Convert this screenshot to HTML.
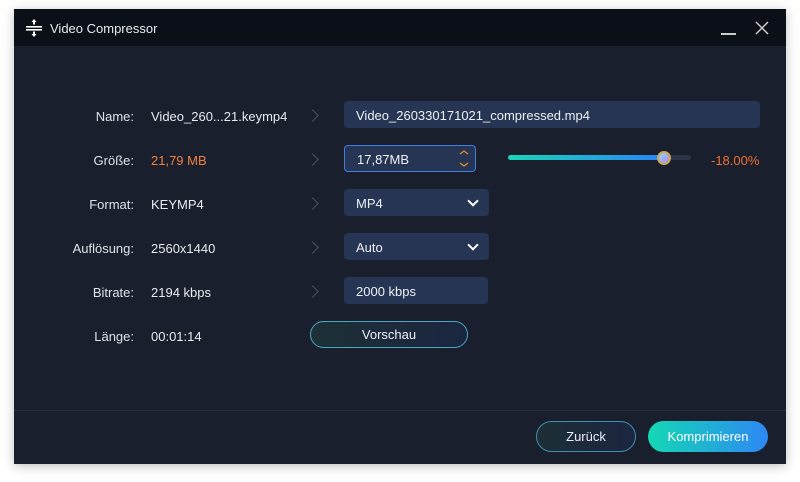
<!DOCTYPE html>
<html><head><meta charset="utf-8"><style>
body{margin:0;width:800px;height:482px;background:#fff;font-family:"Liberation Sans",sans-serif;position:relative;overflow:hidden}
.win{position:absolute;left:14px;top:9px;width:772px;height:455px;background:#1a1f2d;box-shadow:0 2px 10px rgba(0,0,0,.25)}
.tb{position:absolute;left:0;top:0;width:772px;height:37px;background:#0b0f17}
.t{position:absolute;color:#e8eaee;font-size:13px}
.lbl{position:absolute;color:#dfe2e8;font-size:13px;text-align:right;width:120px}
.val{position:absolute;color:#e8eaee;font-size:13px}
.box{position:absolute;background:#263553;border-radius:4px;color:#eef0f4;font-size:13px;box-sizing:border-box;padding-left:12px;padding-top:2px;display:flex;align-items:center}
.chev{position:absolute;width:8px;height:8px;border-right:1.5px solid #4b5363;border-top:1.5px solid #4b5363;transform:rotate(45deg)}
.dd{position:absolute;right:12px;top:8px;width:6px;height:6px;border-right:2px solid #fff;border-bottom:2px solid #fff;transform:rotate(45deg)}
.sep{position:absolute;left:0;top:401px;width:772px;height:1px;background:#262d3c}
</style></head><body>
<div class="win">
<div class="tb">
<svg style="position:absolute;left:12px;top:10px" width="16" height="18" viewBox="0 0 16 18"><g fill="#fff"><rect x="0" y="7" width="16" height="1.6"/><rect x="0" y="10" width="16" height="1.6"/><path d="M8 0l2.5 3H9v2.5H7V3H5.5z"/><path d="M8 18l2.5-3H9v-2.5H7V15H5.5z"/></g></svg>
<div class="t" style="left:36px;top:12px">Video Compressor</div>
<div style="position:absolute;left:707px;top:24px;width:15px;height:1.5px;background:#ccc"></div>
<svg style="position:absolute;left:741px;top:12px" width="14" height="14"><path d="M1 1L13 13M13 1L1 13" stroke="#ccc" stroke-width="1.5"/></svg>
</div>
<div class="lbl" style="left:0;top:100px">Name:</div><div class="val" style="left:137px;top:100px">Video_260...21.keymp4</div>
<div class="lbl" style="left:0;top:144px">Größe:</div><div class="val" style="left:137px;top:144px;color:#f08040">21,79 MB</div>
<div class="lbl" style="left:0;top:188px">Format:</div><div class="val" style="left:137px;top:188px">KEYMP4</div>
<div class="lbl" style="left:0;top:232px">Auflösung:</div><div class="val" style="left:137px;top:232px">2560x1440</div>
<div class="lbl" style="left:0;top:276px">Bitrate:</div><div class="val" style="left:137px;top:276px">2194 kbps</div>
<div class="lbl" style="left:0;top:320px">Länge:</div><div class="val" style="left:137px;top:320px">00:01:14</div>
<div class="chev" style="left:294px;top:102px"></div><div class="chev" style="left:294px;top:146px"></div><div class="chev" style="left:294px;top:190px"></div><div class="chev" style="left:294px;top:234px"></div><div class="chev" style="left:294px;top:278px"></div>
<div class="box" style="left:330px;top:92px;width:416px;height:27px">Video_260330171021_compressed.mp4</div>
<div class="box" style="left:330px;top:136px;width:132px;height:27px;border:1.5px solid #3f7fe0">17,87MB
<svg style="position:absolute;right:6px;top:3px" width="10" height="20"><path d="M1 5l4-3 4 3M1 14l4 3 4-3" stroke="#e0902c" stroke-width="1.3" fill="none"/></svg></div>
<div style="position:absolute;left:494px;top:146px;width:183px;height:5px;border-radius:3px;background:#2c3547"></div>
<div style="position:absolute;left:494px;top:146px;width:156px;height:5px;border-radius:3px;background:linear-gradient(90deg,#18d6b8,#2a84f5)"></div>
<div style="position:absolute;left:643px;top:142px;width:10px;height:10px;border-radius:50%;border:2px solid #c8a85a;background:linear-gradient(135deg,#7ee0f0,#c07ef0)"></div>
<div class="val" style="left:697px;top:144px;color:#f07030">-18.00%</div>
<div class="box" style="left:330px;top:180px;width:145px;height:27px">MP4<div class="dd"></div></div>
<div class="box" style="left:330px;top:224px;width:145px;height:27px">Auto<div class="dd"></div></div>
<div class="box" style="left:330px;top:268px;width:144px;height:27px">2000 kbps</div>
<div style="position:absolute;left:296px;top:312px;width:158px;height:27px;box-sizing:border-box;border-radius:14px;border:1.5px solid #4aa8c0;background:linear-gradient(90deg,#1c3036,#1b2540);color:#eef;font-size:13px;text-align:center;line-height:26px">Vorschau</div>
<div class="sep"></div>
<div style="position:absolute;left:522px;top:412px;width:100px;height:31px;box-sizing:border-box;border-radius:16px;border:1.5px solid #3e8fb0;background:linear-gradient(90deg,#1d2e36,#1b2540);color:#eef;font-size:13px;text-align:center;line-height:30px">Zurück</div>
<div style="position:absolute;left:634px;top:412px;width:120px;height:31px;border-radius:16px;background:linear-gradient(90deg,#14d8b4,#2d88f4);color:#fff;font-size:13px;text-align:center;line-height:32px">Komprimieren</div>
</div>
</body></html>
